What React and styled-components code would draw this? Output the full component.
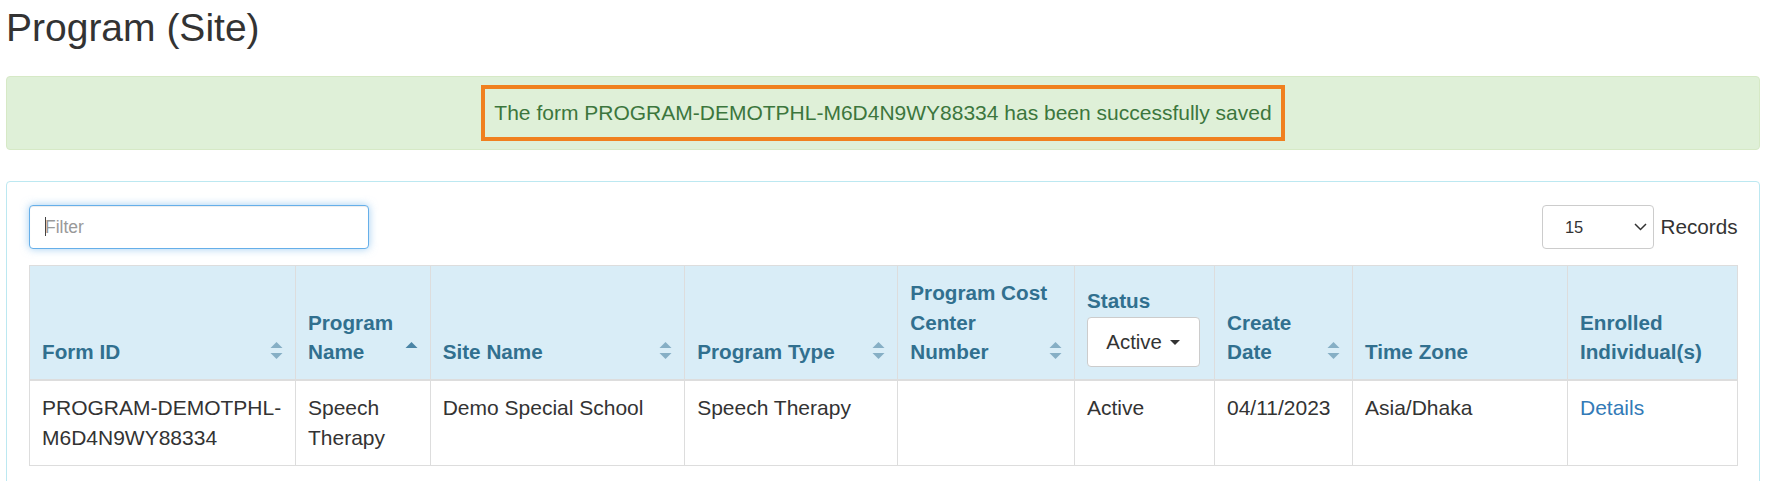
import React from 'react';
import styled, { createGlobalStyle } from 'styled-components';

const GlobalStyle = createGlobalStyle`
  * { box-sizing: border-box; }
  html, body { margin: 0; padding: 0; background: #fff; }
  body {
    font-family: "Liberation Sans", Arial, Helvetica, sans-serif;
    font-size: 21px;
    line-height: 1.42857;
    color: #333;
  }
`;

const Page = styled.div`
  padding: 0 8px 0 6px;
`;

const Title = styled.h1`
  margin: 7px 0 26px 0;
  font-size: 39px;
  font-weight: 400;
  line-height: 1.1;
  color: #333;
`;

const Alert = styled.div`
  display: flex;
  justify-content: center;
  margin: 0 0 31px;
  padding: 8.3px 15px;
  background: #dff0d8;
  border: 1px solid #d6e9c6;
  border-radius: 4px;
  color: #3c763d;
`;

const Highlight = styled.span`
  display: block;
  padding: 9px 9.5px;
  border: 4px solid #f0801f;
`;

const Panel = styled.div`
  border: 1px solid #bce8f1;
  border-radius: 4px;
  padding: 23px 21.4px 24px 22px;
`;

const Toolbar = styled.div`
  display: flex;
  justify-content: space-between;
  align-items: center;
  margin-bottom: 16px;
`;

const FilterWrap = styled.div`
  position: relative;
  width: 340px;
  height: 43.6px;
`;

const FilterInput = styled.input`
  width: 100%;
  height: 100%;
  padding: 0 15px;
  border: 1px solid #66afe9;
  border-radius: 4px;
  outline: none;
  font-family: inherit;
  font-size: 17.5px;
  color: #555;
  box-shadow: inset 0 1px 1px rgba(0, 0, 0, 0.075), 0 0 8px rgba(102, 175, 233, 0.6);
  &::placeholder { color: #999; }
`;

const TextCaret = styled.span`
  position: absolute;
  left: 15.6px;
  top: 11.6px;
  width: 1.6px;
  height: 19.4px;
  background: #444;
`;

const RecordsGroup = styled.div`
  display: flex;
  align-items: center;
  gap: 6.7px;
  font-size: 20.7px;
`;

const SelectWrap = styled.div`
  position: relative;
  width: 112px;
  height: 43.6px;
`;

const Select = styled.select`
  appearance: none;
  -webkit-appearance: none;
  width: 100%;
  height: 100%;
  padding: 0 0 0 22px;
  background: #fff;
  border: 1px solid #ccc;
  border-radius: 4px;
  font-family: inherit;
  font-size: 16.5px;
  color: #333;
  outline: none;
`;

const Chevron = styled.svg`
  position: absolute;
  right: 7px;
  top: 18px;
  pointer-events: none;
`;

const RecordsLabel = styled.span`
  color: #333;
`;

const Table = styled.table`
  width: 100%;
  border-collapse: collapse;
  table-layout: fixed;
`;

const Col = styled.col`
  width: ${(p) => (p.$w ? `${p.$w}px` : 'auto')};
`;

const Th = styled.th`
  position: relative;
  background: #d9edf7;
  color: #31708f;
  font-size: 20.7px;
  font-weight: 700;
  text-align: left;
  vertical-align: bottom;
  padding: 12px ${(p) => (p.$sortable ? '24px' : '12px')} 12px 12px;
  border: 1px solid #ddd;
  border-bottom-width: 2px;
`;

const SortIcon = styled.svg`
  position: absolute;
  right: 12px;
  bottom: 19.5px;
`;

const StatusButton = styled.div`
  display: flex;
  align-items: center;
  gap: 8.6px;
  width: max-content;
  height: 49.3px;
  margin-top: 2px;
  padding: 0 18.4px;
  background: #fff;
  border: 1px solid #ccc;
  border-radius: 4px;
  color: #333;
  font-weight: 400;
  font-size: 20.4px;
`;

const DropCaret = styled.span`
  width: 0;
  height: 0;
  border-top: 5.6px solid #333;
  border-left: 5.8px solid transparent;
  border-right: 5.8px solid transparent;
`;

const Td = styled.td`
  padding: 12px;
  border: 1px solid #ddd;
  vertical-align: top;
  color: #333;
`;

const Link = styled.a`
  color: #337ab7;
  text-decoration: none;
`;

function Sort({ dir }) {
  if (dir === 'asc') {
    return (
      <SortIcon width="13" height="17" viewBox="0 0 13 17">
        <polygon points="0.5,6 6.5,0 12.5,6" fill="#4a85a6" />
      </SortIcon>
    );
  }
  return (
    <SortIcon width="13" height="17" viewBox="0 0 13 17">
      <polygon points="0.5,6 6.5,0 12.5,6" fill="#86afc5" />
      <polygon points="0.5,11 12.5,11 6.5,17" fill="#86afc5" />
    </SortIcon>
  );
}

const columns = [
  { w: 266, label: 'Form ID', sort: 'both' },
  { w: 134.7, label: 'Program Name', sort: 'asc' },
  { w: 254.5, label: 'Site Name', sort: 'both' },
  { w: 213.1, label: 'Program Type', sort: 'both' },
  { w: 176.7, label: 'Program Cost Center Number', sort: 'both' },
  { w: 140, label: 'Status', status: true },
  { w: 138, label: 'Create Date', sort: 'both' },
  { w: 215, label: 'Time Zone' },
  { w: 0, label: 'Enrolled Individual(s)' },
];

export default function App() {
  return (
    <>
      <GlobalStyle />
      <Page>
        <Title>Program (Site)</Title>
        <Alert>
          <Highlight>The form PROGRAM-DEMOTPHL-M6D4N9WY88334 has been successfully saved</Highlight>
        </Alert>
        <Panel>
          <Toolbar>
            <FilterWrap>
              <FilterInput placeholder="Filter" />
              <TextCaret />
            </FilterWrap>
            <RecordsGroup>
              <SelectWrap>
                <Select defaultValue="15">
                  <option value="10">10</option>
                  <option value="15">15</option>
                  <option value="25">25</option>
                  <option value="50">50</option>
                </Select>
                <Chevron width="13" height="8" viewBox="0 0 13 8">
                  <polyline points="1,1 6.5,6.5 12,1" fill="none" stroke="#333" strokeWidth="1.5" />
                </Chevron>
              </SelectWrap>
              <RecordsLabel>Records</RecordsLabel>
            </RecordsGroup>
          </Toolbar>
          <Table>
            <colgroup>
              {columns.map((c) => (
                <Col key={c.label} $w={c.w} />
              ))}
            </colgroup>
            <thead>
              <tr>
                {columns.map((c) => (
                  <Th key={c.label} $sortable={!!c.sort}>
                    {c.status ? (
                      <>
                        <div>Status</div>
                        <StatusButton>
                          Active
                          <DropCaret />
                        </StatusButton>
                      </>
                    ) : (
                      c.label
                    )}
                    {c.sort && <Sort dir={c.sort} />}
                  </Th>
                ))}
              </tr>
            </thead>
            <tbody>
              <tr>
                <Td>PROGRAM-DEMOTPHL-M6D4N9WY88334</Td>
                <Td>Speech Therapy</Td>
                <Td>Demo Special School</Td>
                <Td>Speech Therapy</Td>
                <Td></Td>
                <Td>Active</Td>
                <Td>04/11/2023</Td>
                <Td>Asia/Dhaka</Td>
                <Td>
                  <Link href="#">Details</Link>
                </Td>
              </tr>
            </tbody>
          </Table>
        </Panel>
      </Page>
    </>
  );
}
